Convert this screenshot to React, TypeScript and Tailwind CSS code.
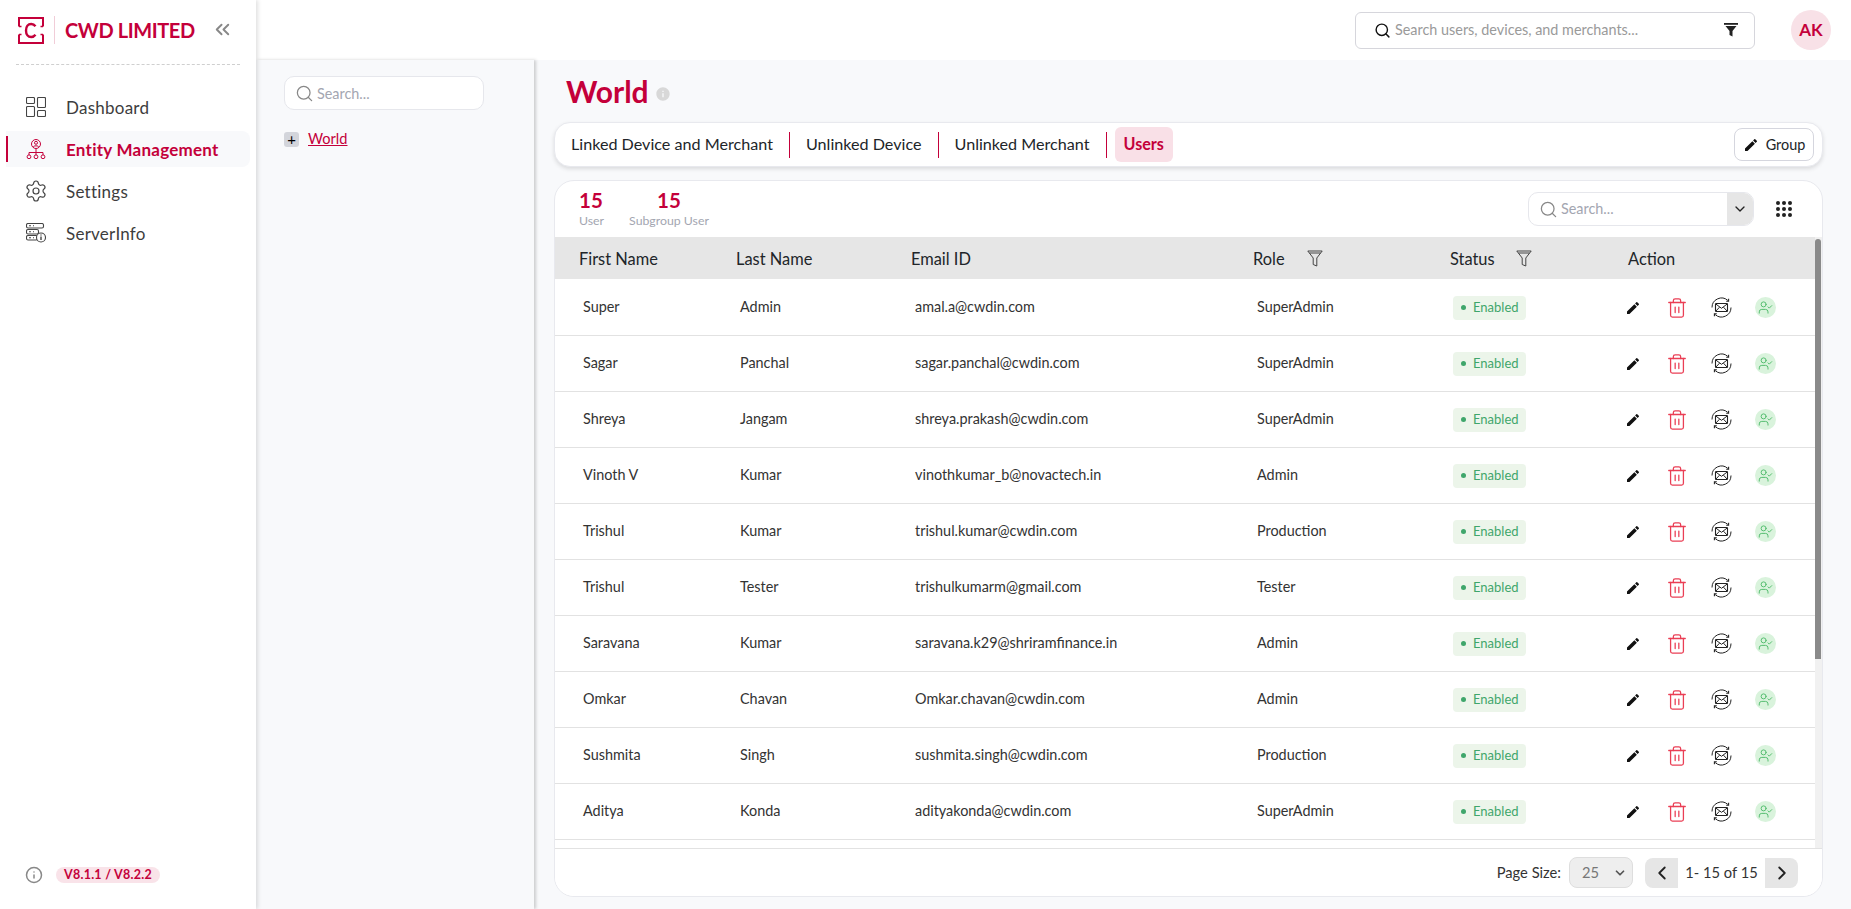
import { ChevronDown, ChevronLeft, ChevronRight, ChevronsLeft, Info, Search, Settings, Trash2, UserCheck } from "lucide-react";
import { MdEdit, MdInfo } from "react-icons/md";

const users = [
  ["Super", "Admin", "amal.a@cwdin.com", "SuperAdmin"],
  ["Sagar", "Panchal", "sagar.panchal@cwdin.com", "SuperAdmin"],
  ["Shreya", "Jangam", "shreya.prakash@cwdin.com", "SuperAdmin"],
  ["Vinoth V", "Kumar", "vinothkumar_b@novactech.in", "Admin"],
  ["Trishul", "Kumar", "trishul.kumar@cwdin.com", "Production"],
  ["Trishul", "Tester", "trishulkumarm@gmail.com", "Tester"],
  ["Saravana", "Kumar", "saravana.k29@shriramfinance.in", "Admin"],
  ["Omkar", "Chavan", "Omkar.chavan@cwdin.com", "Admin"],
  ["Sushmita", "Singh", "sushmita.singh@cwdin.com", "Production"],
  ["Aditya", "Konda", "adityakonda@cwdin.com", "SuperAdmin"],
];

const cols = "grid grid-cols-[157px_175px_342px_197px_178px_1fr]";

function Logo() {
  return (
    <svg width="26" height="27" viewBox="0 0 26 27" fill="none" stroke="#c4003a" strokeWidth="2">
      <path d="M1 9.5V1H25V9.5M1 17.5V26H25V17.5" />
      <path d="M1 9.5H3.5M1 17.5H3.5M22.5 9.5H25M22.5 17.5H25" strokeWidth="1.6" />
      <path d="M17.5 9.2C16.3 7.6 14.9 7 13.2 7C10 7 8 9.6 8 13.5C8 17.4 10 20 13.2 20C14.9 20 16.3 19.4 17.5 17.8" strokeWidth="2.4" />
    </svg>
  );
}

function DashIcon() {
  return (
    <svg width="20" height="20" viewBox="0 0 20 20" fill="none" stroke="#444" strokeWidth="1.1">
      <rect x="0.5" y="0.5" width="8" height="6" rx="1" />
      <rect x="0.5" y="9.5" width="8" height="10" rx="1" />
      <rect x="11.5" y="0.5" width="8" height="10" rx="1" />
      <rect x="11.5" y="13.5" width="8" height="6" rx="1" />
    </svg>
  );
}

function EntityIcon() {
  return (
    <svg width="20" height="20" viewBox="0 0 20 20" fill="none" stroke="#c4003a" strokeWidth="1">
      <circle cx="10" cy="5" r="4.5" />
      <circle cx="10" cy="3.8" r="1.5" />
      <path d="M7.2 8C7.6 6.4 12.4 6.4 12.8 8" />
      <path d="M10 9.5V13.5M3 16V13.5H17V16M10 13.5V16" />
      <circle cx="3" cy="17.8" r="1.9" />
      <circle cx="10" cy="17.8" r="1.9" />
      <circle cx="17" cy="17.8" r="1.9" />
    </svg>
  );
}

function ServerIcon() {
  return (
    <svg width="20" height="20" viewBox="0 0 20 20" fill="none" stroke="#444" strokeWidth="1.1">
      <rect x="0.5" y="0.5" width="17" height="4.5" rx="1.5" />
      <rect x="0.5" y="6.5" width="12" height="4.5" rx="1.5" />
      <rect x="0.5" y="12.5" width="11" height="4.5" rx="1.5" />
      <path d="M3 2.7H5M3 8.7H5M3 14.7H5M7 2.7H8M7 8.7H8M7 14.7H8" />
      <circle cx="15" cy="14.5" r="4.5" fill="#fff" />
      <path d="M15 13.5V17M15 11.5V12.5" strokeWidth="1.4" />
    </svg>
  );
}

function FilledFunnel() {
  return (
    <svg width="14" height="14" viewBox="0 0 14 14" fill="#222">
      <rect x="0" y="0" width="14" height="1.8" />
      <path d="M1.5 3H12.5L8.5 8V13.5L5.5 12V8Z" />
    </svg>
  );
}

function OutlineFunnel() {
  return (
    <svg width="16" height="17" viewBox="0 0 16 17" fill="none" stroke="#444" strokeWidth="1" className="mt-[2px]">
      <path d="M0.8 1H15.2L9.8 8V16L6.2 14.5V8Z" />
      <path d="M2.5 3H13.5" />
    </svg>
  );
}

function DotsIcon() {
  return (
    <svg width="16" height="16" viewBox="0 0 16 16" fill="#222">
      {[2, 8, 14].flatMap((y) => [2, 8, 14].map((x) => <circle key={`${x}-${y}`} cx={x} cy={y} r="2" />))}
    </svg>
  );
}

function MailSync() {
  return (
    <svg width="21" height="21" viewBox="0 0 21 21" fill="none" stroke="#222" strokeWidth="1">
      <path d="M1 10.5A9.5 9.5 0 0 1 16.8 3.4M20 10.5A9.5 9.5 0 0 1 4.2 17.6" />
      <path d="M17.6 1.8V4.2H15.2M3.4 19.2V16.8H5.8" strokeWidth="1.1" />
      <rect x="4.5" y="6.5" width="12" height="8" rx="0.8" strokeWidth="1.1" />
      <path d="M4.8 7L10.5 11.3L16.2 7M4.8 14.2L8.5 10.2M16.2 14.2L12.5 10.2" />
    </svg>
  );
}

function NavItem({ label, icon, active }: { label: string; icon: React.ReactNode; active?: boolean }) {
  return (
    <div className={`relative ml-[6px] flex h-[36px] w-[244px] items-center gap-[20px] rounded-r-lg pl-[20px] text-[17px] tracking-[0.25px] ${active ? "bg-[#f8f9fb] font-bold text-[#c4003a]" : "text-[#3d3d3d]"}`}>
      {active && <span className="absolute left-0 top-[5px] h-[26px] w-[2px] bg-[#c4003a]" />}
      <span className="flex w-[20px] justify-center">{icon}</span>
      <span className="pt-[2px]">{label}</span>
    </div>
  );
}

export default function App() {
  return (
    <div className="flex h-screen w-full overflow-hidden bg-[#f8f9fb] font-['Lato',sans-serif] text-[#212529]">
      {/* Sidebar */}
      <aside className="z-20 flex h-full w-[256px] shrink-0 flex-col bg-white shadow-[2px_0_4px_rgba(0,0,0,0.12)]">
        <div className="mx-[16px] flex h-[65px] items-center border-b border-dashed border-[#cfcfcf] pb-[4px] pl-[2px]">
          <Logo />
          <span className="ml-[10px] h-[28px] w-px bg-[#f1cdd8]" />
          <span className="ml-[10px] whitespace-nowrap text-[20px] font-bold leading-none tracking-[-0.4px] text-[#c4003a]">CWD LIMITED</span>
          <ChevronsLeft size={23} color="#888" className="ml-[16px] mt-[-2px]" />
        </div>
        <nav className="mt-[24px] flex flex-col gap-[6px]">
          <NavItem label="Dashboard" icon={<DashIcon />} />
          <NavItem label="Entity Management" icon={<EntityIcon />} active />
          <NavItem label="Settings" icon={<Settings size={24} color="#444" strokeWidth={1.2} className="shrink-0" />} />
          <NavItem label="ServerInfo" icon={<ServerIcon />} />
        </nav>
        <div className="mb-[25px] mt-auto flex items-center gap-[13px] pl-[25px]">
          <Info size={18} color="#888" />
          <span className="rounded-full bg-[#f9e3e9] px-[8px] py-px text-[12.5px] font-bold leading-[14px] tracking-[0.25px] text-[#c4003a]">V8.1.1 / V8.2.2</span>
        </div>
      </aside>

      <div className="flex min-w-0 flex-1 flex-col">
        {/* Top bar */}
        <header className="flex h-[60px] shrink-0 items-center justify-end bg-white pr-[20px]">
          <div className="flex h-[37px] w-[400px] items-center rounded-md border border-[#d6d6dc] bg-white pl-[18px] pr-[16px] text-[14.4px] text-[#9a9a9a]">
            <Search size={17} color="#111" strokeWidth={2} />
            <span className="ml-[4px] flex-1">Search users, devices, and merchants...</span>
            <FilledFunnel />
          </div>
          <div className="ml-[36px] flex h-[40px] w-[40px] items-center justify-center rounded-full bg-[#f8e1e7] text-[17px] font-bold text-[#c4003a]">AK</div>
        </header>

        <div className="flex min-h-0 flex-1">
          {/* Tree panel */}
          <section className="z-10 w-[278px] shrink-0 bg-[#f8f9fb] pl-[28px] pt-[16px] shadow-[2px_0_3px_rgba(0,0,0,0.18)]">
            <div className="flex h-[34px] w-[200px] items-center gap-[3px] rounded-[10px] border border-[#e6e7ec] bg-white pl-[10px] text-[14.4px] text-[#a3a6b1]">
              <Search size={19} color="#888" strokeWidth={1.6} />
              <span className="pt-[2px]">Search...</span>
            </div>
            <div className="mt-[22px] flex items-center gap-[9px]">
              <span className="flex h-[15px] w-[15px] items-center justify-center rounded-[3px] bg-[#d3d5db] text-[15px] leading-none text-black">+</span>
              <span className="text-[14.6px] leading-none text-[#c4003a] underline">World</span>
            </div>
          </section>

          {/* Main */}
          <main className="flex min-w-0 flex-1 flex-col pl-[20px] pr-[28px]">
            <div className="flex h-[62px] shrink-0 items-center pl-[12px]">
              <h1 className="text-[30px] font-bold leading-none text-[#c4003a]">World</h1>
              <MdInfo size={16} color="#d8d8d8" className="ml-[6px] mt-[5px]" />
            </div>

            <div className="flex h-[45px] shrink-0 items-center rounded-2xl border border-[#e8e9ee] bg-white pl-[16px] pr-[8px] text-[16.15px] shadow-[0_2px_4px_rgba(0,0,0,0.12)]">
              <span>Linked Device and Merchant</span>
              <span className="mx-[16px] h-[26px] w-px bg-[#c4003a]" />
              <span>Unlinked Device</span>
              <span className="mx-[16px] h-[26px] w-px bg-[#c4003a]" />
              <span>Unlinked Merchant</span>
              <span className="ml-[16px] mr-[8px] h-[26px] w-px bg-[#c4003a]" />
              <span className="rounded-md bg-[#f9e0e7] px-[9px] py-[5px] font-bold text-[#c4003a]">Users</span>
              <button className="ml-auto flex h-[33px] w-[80px] items-center justify-center gap-[7px] rounded-lg border border-[#d5d6de] bg-white text-[14.4px]">
                <MdEdit size={16} color="#111" />
                Group
              </button>
            </div>

            {/* Users card */}
            <div className="relative mb-[12px] mt-[13px] flex min-h-0 flex-1 flex-col overflow-hidden rounded-[20px] border border-[#e8e9ee] bg-white">
              <div className="flex h-[56px] shrink-0 items-center pl-[24px] pr-[30px]">
                <div className="flex w-[50px] flex-col items-start">
                  <span className="text-[20.5px] font-bold leading-[24px] text-[#c4003a]">15</span>
                  <span className="text-[12.3px] leading-[18px] text-[#a3a6b1]">User</span>
                </div>
                <div className="flex w-[80px] flex-col items-center">
                  <span className="text-[20.5px] font-bold leading-[24px] text-[#c4003a]">15</span>
                  <span className="whitespace-nowrap text-[12.3px] leading-[18px] text-[#a3a6b1]">Subgroup User</span>
                </div>
                <div className="ml-auto flex h-[34px] w-[226px] overflow-hidden rounded-[10px] border border-[#e6e7ec]">
                  <div className="flex flex-1 items-center gap-[3px] pl-[10px] text-[14.4px] text-[#a3a6b1]">
                    <Search size={19} color="#888" strokeWidth={1.6} />
                    Search...
                  </div>
                  <div className="flex w-[26px] items-center justify-center bg-[#e6e6e6]">
                    <ChevronDown size={16} color="#222" />
                  </div>
                </div>
                <span className="ml-[22px]"><DotsIcon /></span>
              </div>

              <div className={`${cols} h-[42px] shrink-0 items-center bg-[#e6e6e6] pl-[24px] text-[16.4px] text-[#212529]`}>
                <span className="pt-[2px]">First Name</span>
                <span className="pt-[2px]">Last Name</span>
                <span className="pt-[2px]">Email ID</span>
                <span className="flex items-center gap-[22px]"><span className="pt-[2px]">Role</span> <OutlineFunnel /></span>
                <span className="flex items-center gap-[21px]"><span className="pt-[2px]">Status</span> <OutlineFunnel /></span>
                <span className="pt-[2px]">Action</span>
              </div>

              <div className="min-h-0 flex-1 overflow-hidden pt-px">
                {users.map((u, i) => (
                  <div key={i} className={`${cols} h-[56px] items-center border-b border-[#e2e2e2] pl-[28px] text-[14.4px] text-[#333]`}>
                    <span className="pb-[2px]">{u[0]}</span>
                    <span className="pb-[2px]">{u[1]}</span>
                    <span className="pb-[2px]">{u[2]}</span>
                    <span className="pb-[2px]">{u[3]}</span>
                    <span className="-ml-px flex h-[24px] w-[73px] items-center gap-[7px] rounded-[4px] bg-[#ecf5ea] pl-[8px] text-[13px] text-[#3fa66b]">
                      <span className="h-[5px] w-[5px] rounded-full bg-[#3fa66b]" />
                      Enabled
                    </span>
                    <span className="-ml-[21px] flex items-center">
                      <span className="flex w-[44px] justify-center"><MdEdit size={16} color="#111" /></span>
                      <span className="flex w-[44px] justify-center"><Trash2 size={22} color="#ea3f55" strokeWidth={1.4} /></span>
                      <span className="flex w-[44px] justify-center"><MailSync /></span>
                      <span className="flex w-[44px] justify-center">
                        <span className="flex h-[21px] w-[21px] items-center justify-center rounded-full bg-[#d9f3dc]">
                          <UserCheck size={15} color="#4fbb6b" strokeWidth={1.5} />
                        </span>
                      </span>
                    </span>
                  </div>
                ))}
                {/* Next row, cut off by the footer */}
                <div className="h-[56px]" />
              </div>

              <div className="flex h-[48px] shrink-0 items-center justify-end border-t border-[#e2e2e2] bg-white pr-[24px] text-[14.7px] text-[#333]">
                <span>Page Size:</span>
                <div className="ml-[8px] flex h-[31px] w-[64px] items-center justify-between rounded-lg border border-[#dedede] bg-[#eeeeee] pl-[12px] pr-[5px] text-[#777]">
                  25
                  <ChevronDown size={14} color="#555" strokeWidth={3} />
                </div>
                <div className="ml-[12px] flex h-[30px] w-[153px] overflow-hidden rounded-lg bg-[#e6e6e6]">
                  <span className="flex w-[33px] items-center justify-center"><ChevronLeft size={22} color="#222" /></span>
                  <span className="flex flex-1 items-center justify-center bg-white">1- 15 of 15</span>
                  <span className="flex w-[33px] items-center justify-center"><ChevronRight size={22} color="#222" /></span>
                </div>
              </div>

              {/* Table scrollbar */}
              <div className="absolute right-0 top-[56px] h-[611px] w-[7px] bg-[#f1f1f1] pt-[2px]">
                <div className="h-[420px] w-[6px] rounded-t-full bg-[#8a8a8a]" />
              </div>
            </div>
          </main>
        </div>
      </div>
    </div>
  );
}
